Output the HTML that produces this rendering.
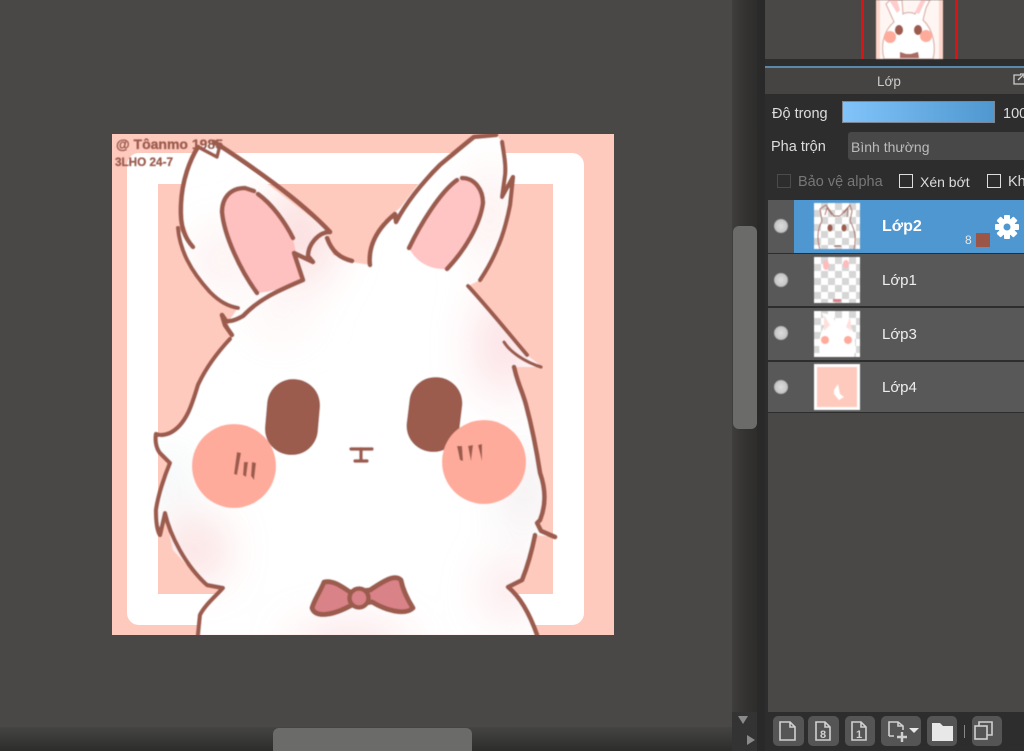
<!DOCTYPE html>
<html><head><meta charset="utf-8">
<style>
html,body{margin:0;padding:0;background:#4a4846;width:1024px;height:751px;overflow:hidden}
body{position:relative;font-family:"Liberation Sans",sans-serif;color:#ddd}
.a{position:absolute}
.t{position:absolute;white-space:nowrap;font-size:14.5px;line-height:16px;filter:blur(.35px)}
.row{position:absolute;left:768px;width:256px;background:#585858}
.eye{position:absolute;left:774px;width:14px;height:14px;border-radius:50%;background:radial-gradient(circle at 50% 50%,#dcdcdc,#c8c8c8 55%,#8e8e8e);filter:blur(.4px)}
.th{position:absolute;left:814px;width:46px;height:46px;background-color:#fff;background-image:linear-gradient(45deg,#d6d6d6 25%,transparent 25%,transparent 75%,#d6d6d6 75%),linear-gradient(45deg,#d6d6d6 25%,transparent 25%,transparent 75%,#d6d6d6 75%);background-size:14px 14px;background-position:0 0,7px 7px;overflow:hidden;filter:blur(.4px)}
.cb{position:absolute;width:12px;height:12px;border:1.5px solid #ddd;top:174px;filter:blur(.3px)}
.btn{position:absolute;top:716px;height:30px;background:#555;border-radius:5px}
</style></head><body>

<!-- scrollbars -->
<div class="a" style="left:732px;top:0;width:25px;height:712px;background:linear-gradient(90deg,#3f3e3c,#343332 50%,#2d2d2c)"></div>
<div class="a" style="left:733px;top:226px;width:24px;height:203px;background:#6b6b69;border-radius:6px"></div>
<div class="a" style="left:757px;top:0;width:8px;height:751px;background:#292929"></div>
<div class="a" style="left:0;top:727px;width:757px;height:24px;background:linear-gradient(#454443,#2d2d2c)"></div>
<div class="a" style="left:273px;top:728px;width:199px;height:23px;background:#6b6b69;border-radius:6px 6px 0 0"></div>
<div class="a" style="left:732px;top:712px;width:25px;height:39px;background:#333"></div>
<div class="a" style="left:738px;top:716px;width:0;height:0;border:5px solid transparent;border-top:8px solid #8a8a8a;border-bottom:0"></div>
<div class="a" style="left:747px;top:735px;width:0;height:0;border:5px solid transparent;border-left:8px solid #8a8a8a;border-right:0"></div>

<!-- canvas art -->
<svg class="a" style="left:0;top:0" width="760" height="727" viewBox="0 0 760 727">
<defs>
<filter id="b1" x="-50%" y="-50%" width="200%" height="200%"><feGaussianBlur stdDeviation="24"/></filter>
<filter id="b2" x="-10%" y="-10%" width="120%" height="120%"><feGaussianBlur stdDeviation=".5"/></filter>
<clipPath id="cv"><rect x="112" y="134" width="502" height="501"/></clipPath>
<clipPath id="body"><path d="M197 148L182 185L182 218L193 248L178 228L190 265L213 295L238 308L228 322L232 338L200 380L187 413L173 433L157 435L157 450L170 463L157 507L160 535L165 513L173 550L207 587L223 588L200 617L198 635L537 635L527 610L508 587L522 582L527 565L535 535L555 537L543 532L538 523L545 497L540 473L532 430L517 380L514 367L542 367L527 355L468 286L480 280L500 248L510 205L513 177L502 197L505 175L502 142L497 135L473 138L423 178L400 208L383 222L372 245L370 265L352 262L333 255L327 238L330 232L213 142Z"/></clipPath>
</defs>
<g clip-path="url(#cv)">
<rect x="112" y="134" width="502" height="501" fill="#ffcabe"/>
<path fill-rule="evenodd" d="M139 153H572a12 12 0 0 1 12 12V613a12 12 0 0 1-12 12H139a12 12 0 0 1-12-12V165a12 12 0 0 1 12-12ZM158 184V594H553V184Z" fill="#fff"/>
<g filter="url(#b2)">
<path d="M197 148L182 185L182 218L193 248L178 228L190 265L213 295L238 308L228 322L232 338L200 380L187 413L173 433L157 435L157 450L170 463L157 507L160 535L165 513L173 550L207 587L223 588L200 617L198 635L537 635L527 610L508 587L522 582L527 565L535 535L555 537L543 532L538 523L545 497L540 473L532 430L517 380L514 367L542 367L527 355L468 286L480 280L500 248L510 205L513 177L502 197L505 175L502 142L497 135L473 138L423 178L400 208L383 222L372 245L370 265L352 262L333 255L327 238L330 232L213 142Z" fill="#fff"/>
<g clip-path="url(#body)">
<g filter="url(#b1)" opacity=".8">
<ellipse cx="300" cy="235" rx="34" ry="50" fill="#fbd2d2"/>
<ellipse cx="220" cy="260" rx="22" ry="30" fill="#fde4e4"/>
<ellipse cx="280" cy="320" rx="30" ry="12" fill="#fde8e8"/>
<ellipse cx="490" cy="215" rx="12" ry="50" fill="#fbd6d6"/>
<ellipse cx="505" cy="345" rx="26" ry="50" fill="#fbd0d6"/>
<ellipse cx="195" cy="550" rx="26" ry="28" fill="#f9c4c4"/>
<ellipse cx="170" cy="480" rx="14" ry="26" fill="#dfe7ea"/>
<ellipse cx="525" cy="490" rx="16" ry="46" fill="#eadfe3"/>
<ellipse cx="510" cy="590" rx="22" ry="26" fill="#f9d2d6"/>
<ellipse cx="350" cy="645" rx="60" ry="14" fill="#f9c8ce"/>
</g>
</g>
<!-- inner ears -->
<path d="M257 293C240 265 224 235 222 212C222 198 230 188 245 188C260 190 280 215 293 238L295 248L303 280C285 288 270 292 257 293Z" fill="#ffc0c0"/>
<path d="M409 248C420 225 440 192 460 180C475 178 483 190 483 203C480 225 465 250 447 269C430 270 416 262 409 248Z" fill="#ffc4c4"/>
<g fill="none" stroke="#9c5b4e" stroke-width="4.6" stroke-linecap="round" stroke-linejoin="round">
<path d="M193 247C185 238 180 228 181 205C182 180 190 160 198 147"/>
<path d="M200 148L217 157L220 145" stroke-width="3.6"/>
<path d="M214 142C250 165 300 200 330 232C318 232 308 245 308 256L313 262L294 253L303 280C280 290 260 298 243 316C236 320 230 322 226 321L222 315L225 325L232 335"/>
<path d="M178 228C180 250 190 270 210 292C220 302 228 306 238 308" stroke-width="4"/>
<path d="M257 293C240 270 224 235 222 212C222 198 230 188 245 188L254 191"/>
<path d="M258 194C272 204 285 222 293 238"/>
<path d="M327 238C332 252 340 258 352 261"/>
<path d="M230 339C215 355 205 370 198 385C192 405 186 425 170 433C165 435 160 436 156 434C155 440 156 448 160 453L170 463C165 475 158 495 156 510C156 525 158 532 160 535L165 513C170 535 185 565 207 585L223 588C215 597 205 605 200 615L198 635" stroke-width="4.2"/>
<path d="M370 265C368 245 378 228 395 214L396 222C405 205 420 185 440 165C452 155 465 144 474 137L496 135"/>
<path d="M502 142C504 155 506 165 505 175L502 197L513 177L510 205C506 225 500 250 480 280" stroke-width="4.2"/>
<path d="M409 248C420 225 440 192 457 180M462 178C475 178 483 190 483 203C480 225 465 250 447 269"/>
<path d="M468 286C490 310 510 335 527 355" stroke-width="4"/>
<path d="M504 342C510 352 525 362 541 367" stroke-width="3.2"/>
<path d="M514 367C518 385 522 390 526 405C534 435 538 460 540 473C546 490 546 505 540 520L537 523L541 531L555 537"/>
<path d="M535 535C532 550 528 565 522 580L508 587C520 597 530 615 537 635"/>
<path d="M351 449L372 449" stroke-width="3.4"/><path d="M361 449L361 459" stroke-width="3.4"/><path d="M355 461L367 461" stroke-width="3.4"/>
</g>
<rect x="266" y="379" width="53" height="76" rx="26" transform="rotate(5 292 417)" fill="#9c5b4e"/>
<rect x="408" y="377" width="53" height="75" rx="26" transform="rotate(7 434 414)" fill="#9c5b4e"/>
<circle cx="234" cy="466" r="42" fill="#ffab9b"/>
<circle cx="484" cy="462" r="42" fill="#ffab9b"/>
<g fill="#9c5b4e">
<path d="M237 452L241 453L237 475L234 474Z"/><path d="M244 462L248 462L246 477L243 475Z"/><path d="M252 462L256 463L254 480L251 476Z"/>
<path d="M457 446L462 446L463 461L460 460Z"/><path d="M468 446L473 445L471 461Z"/><path d="M478 445L482 444L482 461Z"/>
</g>
<!-- bow -->
<path d="M350 592C340 585 332 580 324 582C320 592 314 600 312 608C315 618 332 616 352 605L372 602C385 610 405 616 413 608C408 600 403 590 401 580C395 574 385 580 370 590Z" fill="#d98288" stroke="#9c5b4e" stroke-width="5" stroke-linejoin="round"/>
<circle cx="359" cy="598" r="9.500" fill="#d98288" stroke="#9c5b4e" stroke-width="4.5"/>
<!-- signature -->
<g fill="#9c5b4e" font-family="Liberation Sans" font-weight="bold" stroke="#9c5b4e" stroke-width=".3">
<text x="116" y="149" font-size="14" textLength="107" lengthAdjust="spacingAndGlyphs">@ Tôanmo 1985</text>
<text x="115" y="166" font-size="12" textLength="58" lengthAdjust="spacingAndGlyphs">3LHO 24-7</text>
</g>
</g>
</g>
</svg>

<!-- right panel -->
<div class="a" style="left:765px;top:0;width:259px;height:751px;background:#2d2d2d"></div>
<div class="a" style="left:765px;top:0;width:259px;height:59px;background:#4a4846"></div>
<div class="a" style="left:861px;top:0;width:3px;height:59px;background:#d91414"></div>
<div class="a" style="left:955px;top:0;width:3px;height:59px;background:#d91414"></div>
<svg class="a" style="left:876px;top:0;filter:blur(.6px)" width="67" height="59" viewBox="0 0 67 59">
<rect width="67" height="59" fill="#ffd6cc"/><rect x="4" width="59" height="59" fill="#fff6f3"/>
<path d="M8 59C5 48 6 32 18 22L10 4L14 0H26L27 14C30 12 36 12 39 14L46 0H54L50 8L47 20C58 30 60 48 57 59Z" fill="#fff" stroke="#dcb5ad" stroke-width="1.2"/>
<path d="M13 0L21 13L24 10L21 0ZM45 0L39 12L43 14L50 0Z" fill="#fcc"/>
<ellipse cx="23" cy="30" rx="4" ry="5" fill="#9c5b4e"/><ellipse cx="42" cy="30" rx="4" ry="5" fill="#9c5b4e"/>
<circle cx="14" cy="37" r="6" fill="#ffab9b"/><circle cx="50" cy="36" r="6" fill="#ffab9b"/>
<path d="M24 52L30 54L35 54L42 52L43 58H24Z" fill="#a96a62"/>
</svg>
<div class="a" style="left:765px;top:66px;width:259px;height:2px;background:#5b88ad"></div>
<div class="a" style="left:765px;top:68px;width:259px;height:26px;background:#454443"></div>
<div class="t" style="left:877px;top:74px;font-size:13.500px;color:#ccc">Lớp</div>
<svg class="a" style="left:1012px;top:72px" width="12" height="14"><path d="M9 3H2V12H12M6 8L11 3M8 2H12V6" fill="none" stroke="#ccc" stroke-width="1.3"/></svg>
<div class="t" style="left:772px;top:106px;color:#ddd">Độ trong</div>
<div class="a" style="left:842px;top:101px;width:153px;height:22px;box-sizing:border-box;border:1px solid #7d8690;background:linear-gradient(90deg,#80c4fa,#4f97cf)"></div>
<div class="t" style="left:1003px;top:106px;color:#ddd">100</div>
<div class="t" style="left:771px;top:139px;color:#ddd">Pha trộn</div>
<div class="a" style="left:848px;top:132px;width:176px;height:28px;background:#484848;border-radius:3px 0 0 3px"></div>
<div class="t" style="left:851px;top:139px;font-size:14px;color:#bbb">Bình thường</div>
<div class="cb" style="left:777px;border-color:#4c4c4c"></div>
<div class="t" style="left:798px;top:174px;color:#777">Bảo vệ alpha</div>
<div class="cb" style="left:899px"></div>
<div class="t" style="left:920px;top:174px;font-size:14px;color:#ddd">Xén bớt</div>
<div class="cb" style="left:987px"></div>
<div class="t" style="left:1008px;top:174px;color:#ddd">Khóa</div>

<!-- layers -->
<div class="row" style="top:200px;height:53px"></div>
<div class="a" style="left:794px;top:200px;width:230px;height:53px;background:#4f97d0"></div>
<div class="row" style="top:254px;height:52px"></div>
<div class="row" style="top:308px;height:52px"></div>
<div class="row" style="top:362px;height:50px"></div>
<div class="eye" style="top:219px"></div><div class="eye" style="top:273px"></div><div class="eye" style="top:326px"></div><div class="eye" style="top:380px"></div>

<div class="th" style="top:203px"><svg width="46" height="46" style="display:block"><g fill="none" stroke="#a87066" stroke-width=".9"><path d="M8 18L6 6L12 2L20 13L26 13L36 2L38 8L36 18M8 18C3 26 3 38 6 46M36 18C42 28 42 38 40 46"/><path d="M11 12L13 5L18 12M30 10L34 5L33 14"/></g><ellipse cx="16" cy="25" rx="2.5" ry="3.5" fill="#9c5b4e"/><ellipse cx="30" cy="25" rx="2.500" ry="3.5" fill="#9c5b4e"/><path d="M20 43L27 43" stroke="#9c5b4e"/></svg></div>
<div class="th" style="top:257px"><svg width="46" height="46" style="display:block"><ellipse cx="12" cy="8" rx="3" ry="5" fill="#fbb"/><ellipse cx="32" cy="7" rx="3" ry="4" fill="#fbb"/><rect x="19" y="42" width="8" height="3" fill="#d98288"/></svg></div>
<div class="th" style="top:311px"><svg width="46" height="46" style="display:block"><path d="M6 46C4 30 6 20 12 14L8 2L18 4L22 12L34 2L36 14C42 24 42 36 40 46Z" fill="#fff"/><path d="M10 4L16 14L10 20ZM36 6L32 16L38 20Z" fill="#fde0dc"/><circle cx="11" cy="29" r="4" fill="#ffab9b"/><circle cx="34" cy="29" r="4" fill="#ffab9b"/></svg></div>
<div class="th" style="top:364px;background:#fff"><div class="a" style="left:3px;top:3px;width:40px;height:40px;background:#ffcabe"></div><svg class="a" width="46" height="46"><path d="M20 26L24 20L26 30L30 33L25 36L20 30Z" fill="#fff"/></svg></div>

<div class="t" style="left:882px;top:219px;font-size:16px;font-weight:bold;color:#fff">Lớp2</div>
<div class="t" style="left:882px;top:273px;font-size:15px;color:#eee">Lớp1</div>
<div class="t" style="left:882px;top:327px;font-size:15px;color:#eee">Lớp3</div>
<div class="t" style="left:882px;top:380px;font-size:15px;color:#eee">Lớp4</div>
<div class="t" style="left:965px;top:232px;font-size:12px;color:#e8e8e8">8</div>
<div class="a" style="left:976px;top:233px;width:14px;height:14px;background:#9c5648"></div>
<svg class="a" style="left:994px;top:214px" width="26" height="26" viewBox="0 0 26 26"><g fill="#fff" transform="translate(13 13)"><rect x="-3" y="-12" width="6" height="6" rx="1"/><rect x="-3" y="6" width="6" height="6" rx="1"/><rect x="-12" y="-3" width="6" height="6" rx="1"/><rect x="6" y="-3" width="6" height="6" rx="1"/><g transform="rotate(45)"><rect x="-3" y="-12" width="6" height="6" rx="1"/><rect x="-3" y="6" width="6" height="6" rx="1"/><rect x="-12" y="-3" width="6" height="6" rx="1"/><rect x="6" y="-3" width="6" height="6" rx="1"/></g></g><circle cx="13" cy="13" r="8.500" fill="#fff"/><circle cx="13" cy="13" r="3.500" fill="#4f97d0"/></svg>

<div class="a" style="left:768px;top:413px;width:256px;height:299px;background:#4a4846"></div>

<!-- toolbar -->
<div class="btn" style="left:773px;width:31px"></div>
<div class="btn" style="left:808px;width:31px"></div>
<div class="btn" style="left:845px;width:30px"></div>
<div class="btn" style="left:881px;width:40px"></div>
<div class="btn" style="left:927px;width:30px"></div>
<div class="a" style="left:964px;top:725px;width:1px;height:13px;background:#888"></div>
<div class="btn" style="left:972px;width:30px"></div>
<svg class="a" style="left:773px;top:716px;filter:blur(.35px)" width="235" height="30" viewBox="0 0 235 30">
<g fill="none" stroke="#d0d0d0" stroke-width="1.6">
<path d="M7 6H17L22 11V24H7ZM17 6V11H22"/>
<path d="M43 6H52L57 11V24H43ZM52 6V11H57"/>
<path d="M79 6H88L93 11V24H79ZM88 6V11H93"/>
<path d="M116 20V6H125L130 10V14M125 6V10H130M116 20H121"/>
<path d="M129 16V26M124 21H134" stroke-width="2.4"/>
<rect x="202" y="10" width="12" height="13"/><path d="M206 10V6H219V19H214"/>
</g>
<text x="50" y="22" font-size="11" font-weight="bold" fill="#d0d0d0" text-anchor="middle" font-family="Liberation Sans">8</text>
<text x="86" y="22" font-size="11" font-weight="bold" fill="#d0d0d0" text-anchor="middle" font-family="Liberation Sans">1</text>
<path d="M136 12H146L141 17Z" fill="#e8e8e8"/>
<path d="M159 7H167L170 10H180V25H159Z" fill="#e8e8e8"/>
</svg>
</body></html>
